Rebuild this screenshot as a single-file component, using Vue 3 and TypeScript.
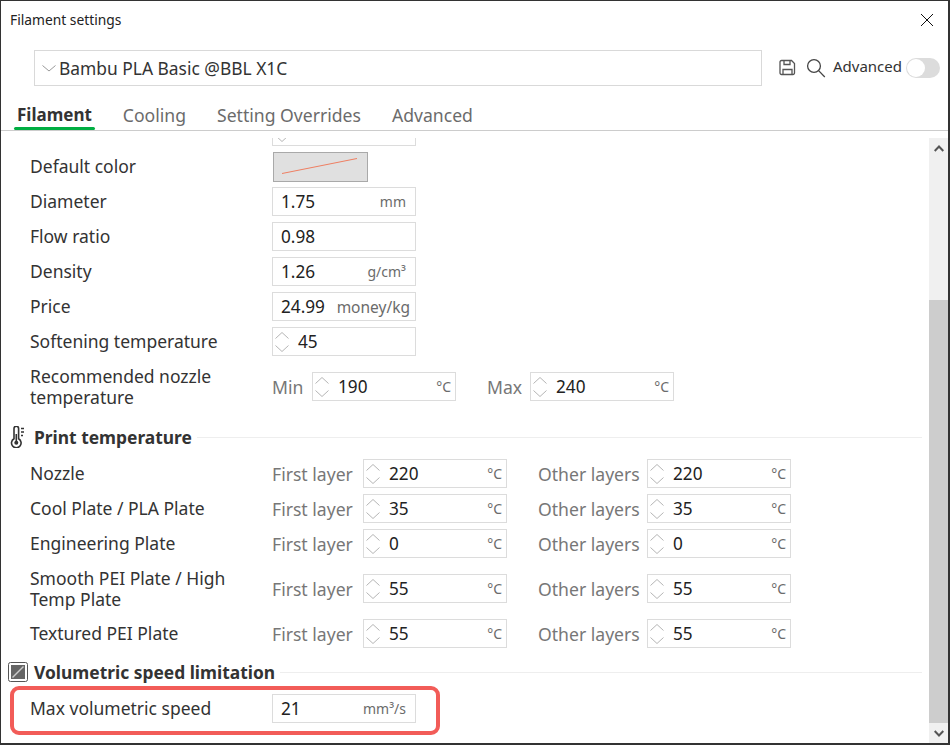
<script setup lang="ts">
interface Field {
  value: string
  unit?: string
  tight?: boolean
  stepper?: boolean
}

interface PairRow {
  label: string
  first: string
  other: string
}

const tabs = ['Filament', 'Cooling', 'Setting Overrides', 'Advanced']

const plainRows: { label: string; field: Field }[] = [
  { label: 'Diameter', field: { value: '1.75', unit: 'mm' } },
  { label: 'Flow ratio', field: { value: '0.98' } },
  { label: 'Density', field: { value: '1.26', unit: 'g/cm³' } },
  { label: 'Price', field: { value: '24.99', unit: 'money/kg', tight: true } },
  { label: 'Softening temperature', field: { value: '45', stepper: true } },
]

const pairRows: PairRow[] = [
  { label: 'Nozzle', first: '220', other: '220' },
  { label: 'Cool Plate / PLA Plate', first: '35', other: '35' },
  { label: 'Engineering Plate', first: '0', other: '0' },
  { label: 'Smooth PEI Plate / High Temp Plate', first: '55', other: '55' },
  { label: 'Textured PEI Plate', first: '55', other: '55' },
]
</script>

<template>
  <div class="window">
    <div class="titlebar">
      <span>Filament settings</span>
      <svg class="close" width="14" height="14" viewBox="0 0 14 14">
        <path d="M1 1l12 12M13 1L1 13" stroke="#111" stroke-width="1" fill="none" />
      </svg>
    </div>

    <div class="preset-bar">
      <div class="preset">
        <svg width="14" height="7" viewBox="0 0 14 7">
          <path d="M.5.5L7 6 13.500.5" stroke="#999" fill="none" />
        </svg>
        <span>Bambu PLA Basic @BBL X1C</span>
      </div>
      <svg class="save" width="17" height="17" viewBox="0 0 17 17" fill="none" stroke="#555" stroke-width="1.3">
        <path d="M2.500 1.500h10l3 3v9.500a1.500 1.500 0 0 1-1.500 1.500H2.500A1.500 1.500 0 0 1 1 14V3a1.500 1.500 0 0 1 1.500-1.500z" />
        <path d="M5 1.500v4h6v-4M4 15.500v-5h9v5" />
      </svg>
      <svg class="search" width="20" height="20" viewBox="0 0 20 20" fill="none" stroke="#444" stroke-width="1.3">
        <circle cx="8" cy="8" r="6.400" />
        <path d="M12.600 12.600l6.200 6.400" />
      </svg>
      <span class="advanced">Advanced</span>
      <span class="toggle"><i /></span>
    </div>

    <div class="tabs">
      <span v-for="(tab, i) in tabs" :key="tab" class="tab" :class="{ active: i === 0 }">{{ tab }}</span>
    </div>

    <div class="body">
      <div class="content">
        <div class="row">
          <span class="label" />
          <div class="field stepper">
            <span class="arrows">
              <svg width="14" height="20" viewBox="0 0 14 20" fill="none" stroke="#b5b5b5">
                <path d="M.5 6.500L7 .5l6.500 6M.5 13.500L7 19.500l6.500-6" />
              </svg>
            </span>
          </div>
        </div>

        <div class="row">
          <span class="label">Default color</span>
          <div class="swatch">
            <svg width="92" height="27" viewBox="0 0 92 27">
              <path d="M8 20.500L83 5.500" stroke="#ef7f62" fill="none" />
            </svg>
          </div>
        </div>

        <div v-for="row in plainRows" :key="row.label" class="row">
          <span class="label">{{ row.label }}</span>
          <div class="field" :class="{ stepper: row.field.stepper }">
            <span v-if="row.field.stepper" class="arrows">
              <svg width="14" height="20" viewBox="0 0 14 20" fill="none" stroke="#b5b5b5">
                <path d="M.5 6.500L7 .5l6.500 6M.5 13.500L7 19.500l6.500-6" />
              </svg>
            </span>
            <span class="value">{{ row.field.value }}</span>
            <span v-if="row.field.unit" class="unit" :class="{ tight: row.field.tight }">{{ row.field.unit }}</span>
          </div>
        </div>

        <div class="row tall">
          <span class="label">Recommended nozzle temperature</span>
          <span class="side w-min">Min</span>
          <div class="field stepper">
            <span class="arrows">
              <svg width="14" height="20" viewBox="0 0 14 20" fill="none" stroke="#b5b5b5">
                <path d="M.5 6.500L7 .5l6.500 6M.5 13.500L7 19.500l6.500-6" />
              </svg>
            </span>
            <span class="value">190</span>
            <span class="unit">°C</span>
          </div>
          <span class="side w-max">Max</span>
          <div class="field stepper">
            <span class="arrows">
              <svg width="14" height="20" viewBox="0 0 14 20" fill="none" stroke="#b5b5b5">
                <path d="M.5 6.500L7 .5l6.500 6M.5 13.500L7 19.500l6.500-6" />
              </svg>
            </span>
            <span class="value">240</span>
            <span class="unit">°C</span>
          </div>
        </div>

        <div class="section first">
          <svg class="section-icon thermo" width="16" height="22" viewBox="0 0 16 22" fill="none" stroke="#333" stroke-width="1.6">
            <path d="M4 2.600a2.300 2.300 0 0 1 4.600 0v10.200a4.800 4.800 0 1 1-4.600 0z" />
            <circle cx="6.300" cy="16.800" r="2" fill="#333" stroke="none" />
            <path d="M6.300 8v8" />
            <path d="M11 2.500h3M11 6h3M11 9.500h2" />
          </svg>
          <span class="section-title">Print temperature</span>
          <span class="section-line" />
        </div>

        <div v-for="row in pairRows" :key="row.label" class="row" :class="{ tall: row.label.length > 30 }">
          <span class="label">{{ row.label }}</span>
          <span class="side w-first">First layer</span>
          <div class="field stepper">
            <span class="arrows">
              <svg width="14" height="20" viewBox="0 0 14 20" fill="none" stroke="#b5b5b5">
                <path d="M.5 6.500L7 .5l6.500 6M.5 13.500L7 19.500l6.500-6" />
              </svg>
            </span>
            <span class="value">{{ row.first }}</span>
            <span class="unit">°C</span>
          </div>
          <span class="side w-other">Other layers</span>
          <div class="field stepper">
            <span class="arrows">
              <svg width="14" height="20" viewBox="0 0 14 20" fill="none" stroke="#b5b5b5">
                <path d="M.5 6.500L7 .5l6.500 6M.5 13.500L7 19.500l6.500-6" />
              </svg>
            </span>
            <span class="value">{{ row.other }}</span>
            <span class="unit">°C</span>
          </div>
        </div>

        <div class="section second">
          <svg class="section-icon volume" width="20" height="20" viewBox="0 0 20 20">
            <rect x=".5" y=".5" width="19" height="19" rx="2" fill="#fff" stroke="#555" />
            <rect x="3" y="3" width="14" height="14" fill="#666" />
            <path d="M4.500 15.500L15.500 4.500" stroke="#ccc" stroke-width="1.500" />
          </svg>
          <span class="section-title">Volumetric speed limitation</span>
          <span class="section-line" />
        </div>

        <div class="row">
          <span class="label">Max volumetric speed</span>
          <div class="field">
            <span class="value">21</span>
            <span class="unit">mm³/s</span>
          </div>
        </div>
      </div>

      <div class="scrollbar">
        <div class="arrow">
          <svg width="10" height="7" viewBox="0 0 10 7" fill="none" stroke="#555" stroke-width="2">
            <path d="M.7 6L5 1.500 9.300 6" />
          </svg>
        </div>
        <div class="track" />
        <div class="thumb" />
        <div class="arrow">
          <svg width="10" height="7" viewBox="0 0 10 7" fill="none" stroke="#555" stroke-width="2">
            <path d="M.7 1L5 5.500 9.300 1" />
          </svg>
        </div>
      </div>
    </div>

    <div class="highlight" />
  </div>
</template>

<style>
html,
body {
  background: #333;
  overflow: hidden;
}
</style>

<style scoped>
.window {
  position: relative;
  box-sizing: border-box;
  width: 949px;
  height: 744px;
  border: 1px solid #333;
  background: #fff;
  display: flex;
  flex-direction: column;
  overflow: hidden;
  font-family: "Noto Sans", Roboto, sans-serif;
  color: #333;
}

.titlebar {
  box-sizing: border-box;
  height: 39px;
  flex: none;
  display: flex;
  align-items: center;
  justify-content: space-between;
  padding: 0 14px 2px 9px;
  font-size: 13.8px;
  color: #222;
}

.preset-bar {
  box-sizing: border-box;
  height: 60px;
  flex: none;
  display: flex;
  align-items: flex-start;
  padding: 10px 0 0 33px;
}

.preset {
  box-sizing: border-box;
  flex: none;
  width: 728px;
  height: 36px;
  border: 1px solid #d9d9d9;
  display: flex;
  align-items: center;
  gap: 3px;
  padding-left: 7px;
  font-size: 17.4px;
  color: #333;
}

.save {
  flex: none;
  margin: 9px 0 0 17px;
}

.search {
  flex: none;
  margin: 8px 0 0 10px;
}

.advanced {
  flex: none;
  margin: 6px 0 0 7px;
  font-size: 15px;
  line-height: 20px;
}

.toggle {
  position: relative;
  flex: none;
  width: 34px;
  height: 20px;
  margin: 8px 0 0 4px;
  border-radius: 10px;
  background: #dcdcdc;
}

.toggle i {
  position: absolute;
  left: 1px;
  top: 1px;
  width: 18px;
  height: 18px;
  border-radius: 50%;
  background: #fff;
}

.tabs {
  height: 31px;
  flex: none;
  box-sizing: border-box;
  display: flex;
  gap: 31px;
  padding-left: 16px;
  border-bottom: 1px solid #ccc;
}

.tab {
  position: relative;
  font-size: 17.6px;
  line-height: 30px;
  color: #6b6b6b;
}

.tab.active {
  font-size: 17px;
  font-weight: 700;
  color: #333;
}

.tab.active::after {
  content: "";
  position: absolute;
  left: -3px;
  right: -3px;
  bottom: 0;
  height: 3px;
  border-radius: 2px;
  background: #00ae42;
}

.body {
  flex: 1;
  min-height: 0;
  margin-top: 7px;
  display: flex;
  overflow: hidden;
}

.content {
  flex: 1;
  min-width: 0;
  margin-top: -24px;
  padding-left: 29px;
}

.row {
  height: 35px;
  display: flex;
  align-items: center;
}

.row.tall {
  height: 55px;
}

.label {
  flex: none;
  width: 242px;
  padding-right: 10px;
  box-sizing: border-box;
  font-size: 17.5px;
  line-height: 21px;
  color: #333;
}

.side {
  flex: none;
  font-size: 17.6px;
  color: #777;
}

.w-min {
  width: 40px;
}

.w-max {
  width: 43px;
  margin-left: 31px;
}

.w-first {
  width: 91px;
}

.w-other {
  width: 109px;
  margin-left: 31px;
}

.field {
  box-sizing: border-box;
  flex: none;
  width: 144px;
  height: 29px;
  border: 1px solid #dcdcdc;
  display: flex;
  align-items: center;
  padding: 0 9px 0 8px;
  background: #fff;
}

.field.stepper {
  padding: 0 4px 0 2px;
}

.arrows {
  display: flex;
  width: 23px;
  flex: none;
}

.value {
  flex: 1;
  font-size: 17.2px;
  color: #222;
}

.unit {
  font-size: 14px;
  color: #6b6b6b;
}

.unit.tight {
  margin-right: -4px;
  font-size: 15.5px;
}

.swatch {
  box-sizing: border-box;
  width: 95px;
  height: 30px;
  margin-left: 1px;
  border: 1px solid #a9a9a9;
  background: #e0e0e0;
  display: flex;
}

.section {
  height: 38px;
  display: flex;
  align-items: center;
  margin-left: -22px;
  margin-right: 7px;
}

.section.first {
  margin-top: 4px;
}

.section.second {
  margin-top: 2px;
}

.section-icon {
  flex: none;
  width: 20px;
}

.section-title {
  margin-left: 6px;
  font-size: 17.4px;
  font-weight: 700;
  color: #333;
}

.section-line {
  flex: 1;
  height: 1px;
  margin-left: 5px;
  background: #eee;
}

.scrollbar {
  flex: none;
  width: 19px;
  display: flex;
  flex-direction: column;
}

.arrow {
  flex: none;
  height: 20px;
  background: #f0f0f0;
  display: flex;
  align-items: center;
  justify-content: center;
}

.track {
  height: 142px;
  flex: none;
  background: #f0f0f0;
}

.thumb {
  flex: 1;
  background: #cdcdcd;
}

.highlight {
  position: absolute;
  box-sizing: border-box;
  left: 9px;
  top: 685px;
  width: 430px;
  height: 49px;
  border: 4px solid #f25c58;
  border-radius: 9px;
  pointer-events: none;
}
</style>
